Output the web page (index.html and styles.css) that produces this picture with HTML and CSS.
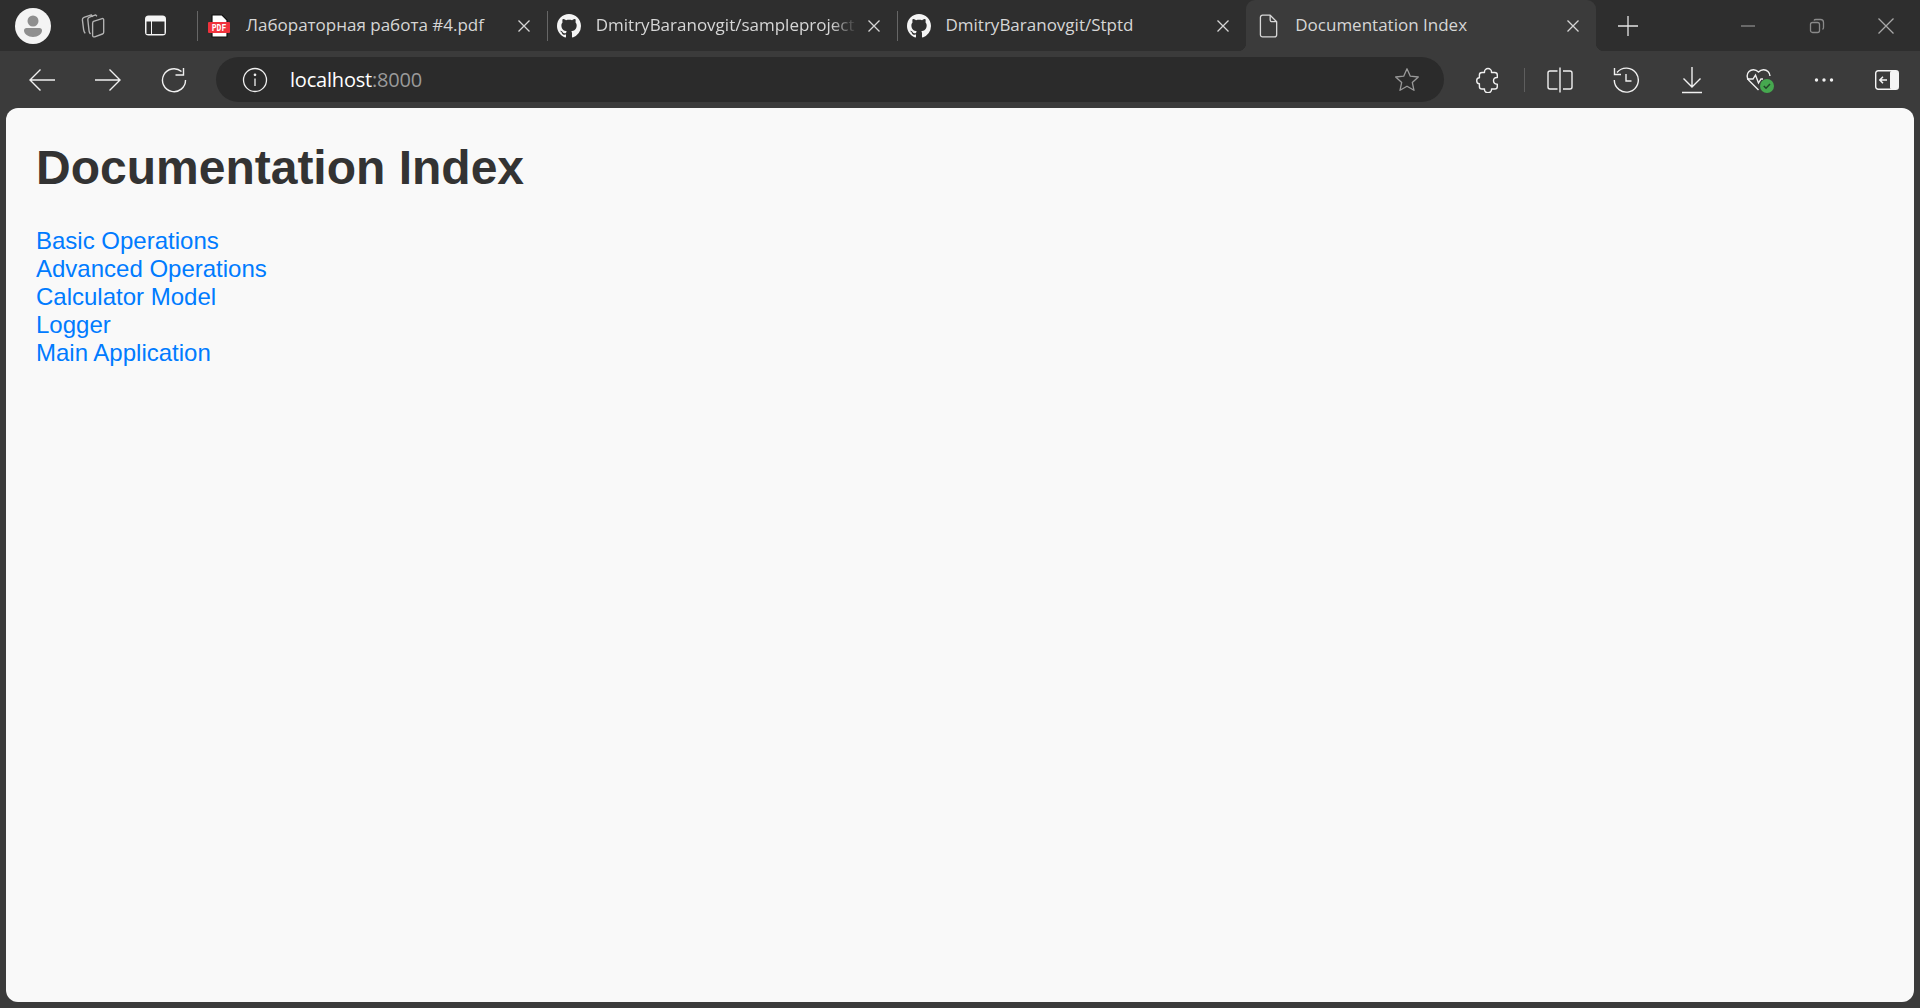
FILE: index.html
```html
<!DOCTYPE html>
<html lang="en">
<head>
  <meta charset="UTF-8" />
  <title>Documentation Index</title>
  <link rel="stylesheet" href="styles.css">
</head>
<body>

  <div class="tabstrip">
    <div class="strip-left">
      <div class="avatar">
        <svg width="36" height="36" viewBox="0 0 36 36"><circle cx="18" cy="18" r="18" fill="#f4f4f4"/><circle cx="18" cy="13" r="5.500" fill="#8f8f8f"/><path d="M9 22.500c0-1.400 1-2.500 2.500-2.500h13c1.500 0 2.500 1.100 2.500 2.500 0 3.500-4 6.500-9 6.500s-9-3-9-6.500z" fill="#8f8f8f"/></svg>
      </div>
      <div class="strip-btn">
        <svg class="collections-icon" width="32" height="32" viewBox="0 0 26 26" fill="none" stroke="#b4b4b4" stroke-width="1.100" stroke-linejoin="round"><path d="M13.500 5.500l-1-1.500-6 2c-1 .4-1.400 1-1.300 2l1 8c.1 1 .5 2 1.300 3"/><path d="M17 5l-1-1-5 1.800c-1 .4-1.500 1-1.400 2l1 9.200c.1 1 .5 1.800 1.200 2.500"/><path d="M14.200 9.300l7-2.300c.7-.2 1.300.2 1.300 1v10c0 .8-.4 1.300-1 1.500l-6.300 2.300c-.9.300-1.700-.2-1.700-1.100V11c0-.8.200-1.400.7-1.700z"/></svg>
      </div>
      <div class="strip-btn">
        <svg width="26" height="26" viewBox="0 0 26 26"><rect x="2" y="2.500" width="21" height="20" rx="3.500" fill="#f4f4f4"/><rect x="9" y="8.500" width="12.500" height="12.500" fill="#2e2e2e"/><rect x="3.500" y="8.500" width="4.500" height="12.500" fill="#2e2e2e"/></svg>
      </div>
    </div>

    <div class="tabs">
      <div class="tab">
        <span class="tab-sep"></span>
        <svg class="tab-icon" width="24" height="24" viewBox="0 0 24 24"><path d="M5 1h10l5 5v17H5z" fill="#fff" stroke="#111" stroke-width="1.200"/><rect x="1" y="8" width="22" height="11" rx="1" fill="#f0323c"/><text x="12" y="16.800" class="pdf-label" text-anchor="middle">PDF</text></svg>
        <span class="tab-title">Лабораторная работа #4.pdf</span>
        <svg class="tab-close" width="14" height="14" viewBox="0 0 14 14"><path d="M1.500 1.500l11 11M12.500 1.500l-11 11"/></svg>
      </div>
      <div class="tab">
        <span class="tab-sep"></span>
        <svg class="tab-icon" width="24" height="24" viewBox="0 0 16 16"><path fill="#f4f4f4" d="M8 0C3.580 0 0 3.580 0 8c0 3.540 2.290 6.530 5.470 7.590.4.070.55-.17.55-.38 0-.19-.01-.82-.01-1.490-2.010.37-2.530-.49-2.690-.94-.09-.23-.48-.94-.82-1.130-.28-.15-.68-.52-.01-.53.63-.01 1.080.58 1.230.82.72 1.210 1.870.87 2.330.66.070-.52.28-.87.51-1.070-1.780-.2-3.640-.89-3.640-3.950 0-.87.31-1.590.82-2.150-.08-.2-.36-1.020.08-2.120 0 0 .67-.21 2.200.82.64-.18 1.320-.27 2-.27.68 0 1.360.09 2 .27 1.530-1.040 2.200-.82 2.200-.82.44 1.100.16 1.920.08 2.120.51.56.82 1.270.82 2.150 0 3.070-1.870 3.750-3.650 3.950.29.25.54.73.54 1.480 0 1.070-.01 1.930-.01 2.200 0 .21.15.46.55.38A8.013 8.013 0 0016 8c0-4.420-3.580-8-8-8z"/></svg>
        <span class="tab-title faded">DmitryBaranovgit/sampleproject</span>
        <svg class="tab-close" width="14" height="14" viewBox="0 0 14 14"><path d="M1.500 1.500l11 11M12.500 1.500l-11 11"/></svg>
      </div>
      <div class="tab">
        <span class="tab-sep"></span>
        <svg class="tab-icon" width="24" height="24" viewBox="0 0 16 16"><path fill="#f4f4f4" d="M8 0C3.580 0 0 3.580 0 8c0 3.540 2.290 6.530 5.470 7.590.4.070.55-.17.55-.38 0-.19-.01-.82-.01-1.490-2.010.37-2.530-.49-2.690-.94-.09-.23-.48-.94-.82-1.130-.28-.15-.68-.52-.01-.53.63-.01 1.080.58 1.230.82.72 1.210 1.870.87 2.330.66.070-.52.28-.87.51-1.070-1.780-.2-3.640-.89-3.640-3.950 0-.87.31-1.590.82-2.150-.08-.2-.36-1.020.08-2.120 0 0 .67-.21 2.200.82.64-.18 1.320-.27 2-.27.68 0 1.360.09 2 .27 1.530-1.040 2.200-.82 2.200-.82.44 1.100.16 1.920.08 2.120.51.56.82 1.270.82 2.150 0 3.070-1.870 3.750-3.650 3.950.29.25.54.73.54 1.480 0 1.070-.01 1.930-.01 2.200 0 .21.15.46.55.38A8.013 8.013 0 0016 8c0-4.420-3.580-8-8-8z"/></svg>
        <span class="tab-title">DmitryBaranovgit/Stptd</span>
        <svg class="tab-close" width="14" height="14" viewBox="0 0 14 14"><path d="M1.500 1.500l11 11M12.500 1.500l-11 11"/></svg>
      </div>
      <div class="tab active">
        <span class="tab-sep"></span>
        <svg class="tab-icon" width="26" height="26" viewBox="0 0 24 24" fill="none" stroke="#d8d8d8" stroke-width="1.200" stroke-linejoin="round"><path d="M7 2h7l6 6v12a2 2 0 0 1-2 2H7a2 2 0 0 1-2-2V4a2 2 0 0 1 2-2z"/><path d="M14 2v4.500A1.500 1.500 0 0 0 15.500 8H20"/></svg>
        <span class="tab-title">Documentation Index</span>
        <svg class="tab-close" width="14" height="14" viewBox="0 0 14 14"><path d="M1.500 1.500l11 11M12.500 1.500l-11 11"/></svg>
      </div>
    </div>

    <div class="new-tab">
      <svg width="22" height="22" viewBox="0 0 22 22" fill="none" stroke="#e4e4e4" stroke-width="1.300"><path d="M11 1v20M1 11h20"/></svg>
    </div>
    <div class="spacer"></div>

    <div class="win-btn">
      <svg width="14" height="14" viewBox="0 0 14 14" fill="none" stroke="#8a8a8a" stroke-width="1.300"><path d="M0 7h14"/></svg>
    </div>
    <div class="win-btn">
      <svg width="16" height="16" viewBox="0 0 16 16" fill="none" stroke="#8a8a8a" stroke-width="1.300"><rect x="1.500" y="4.500" width="9" height="10" rx="2"/><path d="M5 2.500c.3-.7 1-1 1.800-1h4.700c1.700 0 3 1.300 3 3v5c0 .8-.4 1.500-1 1.800"/></svg>
    </div>
    <div class="win-btn">
      <svg width="16" height="16" viewBox="0 0 16 16" fill="none" stroke="#a8a8a8" stroke-width="1.300"><path d="M.5.500l15 15M15.500.500l-15 15"/></svg>
    </div>
  </div>

  <div class="toolbar">
    <div class="tool-btn">
      <svg width="28" height="24" viewBox="0 0 28 24" fill="none" stroke="#f0f0f0" stroke-width="1.400"><path d="M27 12H2M12.500 1.500L2 12l10.500 10.500"/></svg>
    </div>
    <div class="tool-btn">
      <svg width="28" height="24" viewBox="0 0 28 24" fill="none" stroke="#f0f0f0" stroke-width="1.400"><path d="M1 12h25M15.500 1.500L26 12 15.500 22.500"/></svg>
    </div>
    <div class="tool-btn">
      <svg width="26" height="26" viewBox="0 0 26 26" fill="none" stroke="#f0f0f0" stroke-width="1.400"><path d="M20.500 4.500A11.500 11.500 0 1 0 24.500 13"/><path d="M14.500 8h8V1"/></svg>
    </div>

    <div class="addressbar">
      <svg class="info-icon" width="26" height="26" viewBox="0 0 26 26" fill="none" stroke="#f0f0f0" stroke-width="1.300"><circle cx="13" cy="13" r="11.500"/><path d="M13 11.500V19"/><circle cx="13" cy="7.800" r=".7" fill="#f0f0f0"/></svg>
      <span class="url">localhost<span class="url-port">:8000</span></span>
      <svg class="star-icon" width="26" height="26" viewBox="0 0 26 26" fill="none" stroke="#9a9a9a" stroke-width="1.300" stroke-linejoin="round"><path d="M13 1.800l3.300 7.400 8 .8-6 5.400 1.700 7.900-7-4.100-7 4.100 1.700-7.900-6-5.400 8-.8z"/></svg>
    </div>

    <div class="tool-btn ext">
      <svg width="24" height="26" viewBox="0 0 24 26" fill="none" stroke="#f0f0f0" stroke-width="1.400" stroke-linejoin="round"><path d="M8.500 5.500c-.3-2.300 1.500-4 3.500-4s3.800 1.700 3.500 4h3.200c1.500 0 2.600 1.100 2.600 2.600v2.400c-2.500-.3-3.800 1.400-3.800 3.300s1.300 3.600 3.800 3.300v2.300c0 1.500-1.100 2.600-2.600 2.600h-3.200c.3 2.300-1.500 3.800-3.500 3.800s-3.800-1.500-3.500-3.800H6c-1.500 0-2.600-1.100-2.600-2.600v-2.600c-1.600 0-2.700-1.400-2.700-3s1.100-3 2.700-3V8.100c0-1.500 1.100-2.600 2.600-2.600z"/></svg>
    </div>
    <span class="tool-sep"></span>
    <div class="tool-btn split">
      <svg width="28" height="28" viewBox="0 0 28 28" fill="none" stroke="#f0f0f0" stroke-width="1.400"><path d="M11.500 5H4a2 2 0 0 0-2 2v14a2 2 0 0 0 2 2h7.500M17 5h7a2 2 0 0 1 2 2v14a2 2 0 0 1-2 2h-7M14 1.500v25"/></svg>
    </div>
    <div class="tool-btn">
      <svg width="28" height="28" viewBox="0 0 28 28" fill="none" stroke="#f0f0f0" stroke-width="1.400"><path d="M5 6.500A12 12 0 1 1 2.300 14"/><path d="M2.500 2v6.500H9"/><path d="M14 8v7h5.500"/></svg>
    </div>
    <div class="tool-btn">
      <svg width="22" height="28" viewBox="0 0 22 28" fill="none" stroke="#f0f0f0" stroke-width="1.400"><path d="M11 1v20M2.500 12.500L11 21l8.500-8.500M1 26.500h20"/></svg>
    </div>
    <div class="tool-btn">
      <svg class="heart-icon" width="30" height="28" viewBox="0 0 30 28" fill="none"><path d="M13.500 24L4 14.500C1.500 12 1.500 8 4 5.500s6.500-2.500 9.500.5c3-3 7-3 9.500-.5 1.300 1.300 2 2.900 2 4.500" stroke="#f0f0f0" stroke-width="1.400"/><path d="M2 13h6l2.500-4 3 8 2.500-4h2" stroke="#f0f0f0" stroke-width="1.400"/><circle cx="22" cy="20" r="7" fill="#46a84f"/><path d="M18.800 20l2.200 2.200 4-4.200" stroke="#23452a" stroke-width="1.500"/></svg>
    </div>
    <div class="tool-btn">
      <svg width="20" height="6" viewBox="0 0 20 6" fill="#f0f0f0"><circle cx="2.500" cy="3" r="1.700"/><circle cx="10" cy="3" r="1.700"/><circle cx="17.500" cy="3" r="1.700"/></svg>
    </div>
    <div class="tool-btn last">
      <svg width="24" height="20" viewBox="0 0 24 20"><rect x=".7" y=".7" width="22.600" height="18.600" rx="2.500" fill="none" stroke="#f4f4f4" stroke-width="1.400"/><rect x="15" y="1" width="8" height="18" rx="1.500" fill="#f4f4f4"/><path d="M12 10H5M8 6.800L4.800 10 8 13.200" fill="none" stroke="#f4f4f4" stroke-width="1.500"/></svg>
    </div>
  </div>

  <main class="page">
    <h1>Documentation Index</h1>
    <ul class="doc-list">
      <li><a href="#">Basic Operations</a></li>
      <li><a href="#">Advanced Operations</a></li>
      <li><a href="#">Calculator Model</a></li>
      <li><a href="#">Logger</a></li>
      <li><a href="#">Main Application</a></li>
    </ul>
  </main>

</body>
</html>
```

FILE: styles.css
```css
html, body {
  height: 100%;
}
body {
  margin: 0;
  display: flex;
  flex-direction: column;
  background: #3b3b3b;
  overflow: hidden;
}

/* tab strip */
.tabstrip {
  display: flex;
  height: 51px;
  background: #2e2e2e;
  font-family: "Open Sans", sans-serif;
}
.strip-left {
  display: flex;
  align-items: center;
  width: 197px;
  padding-left: 15px;
  box-sizing: border-box;
}
.avatar {
  display: flex;
  margin-right: 24px;
}
.strip-btn {
  display: flex;
  justify-content: center;
  width: 36px;
}
.strip-btn + .strip-btn {
  margin-left: 27px;
}
.collections-icon {
  margin-left: -2px;
}
.tabs {
  display: grid;
  grid-template-columns: repeat(4, minmax(0, 1fr));
  width: 1399px;
}
.tab {
  display: flex;
  align-items: center;
  padding-right: 16px;
  color: #d6d6d6;
  font-size: 17px;
  position: relative;
}
.tab-sep {
  width: 1px;
  height: 30px;
  background: #666;
  margin-right: 9px;
}
.tab.active .tab-sep {
  background: transparent;
}
.tab-icon {
  flex: none;
  margin-right: 15px;
}
.tab-title {
  flex: 1;
  overflow: hidden;
  white-space: nowrap;
  margin-right: 16px;
  line-height: 24px;
  margin-bottom: 2px;
}
.tab-title.faded {
  margin-right: 10px;
  -webkit-mask-image: linear-gradient(to right, #000 90%, transparent 100%);
  mask-image: linear-gradient(to right, #000 90%, transparent 100%);
}
.tab-close {
  flex: none;
  fill: none;
  stroke: #d6d6d6;
  stroke-width: 1.3;
}
.pdf-label {
  font-family: "DejaVu Sans Mono", monospace;
  font-size: 8px;
  font-weight: bold;
  fill: #fff;
}
.tab.active {
  background: #3b3b3b;
  border-radius: 9px 9px 0 0;
}
.tab.active .tab-icon {
  margin-left: -1px;
  margin-right: 14px;
}
/* concave corners either side of the active tab */
.tab.active::before,
.tab.active::after {
  content: "";
  position: absolute;
  bottom: 0;
  width: 8px;
  height: 8px;
}
.tab.active::before {
  left: -8px;
  background: radial-gradient(circle at 0 0, transparent 8px, #3b3b3b 8.500px);
}
.tab.active::after {
  right: -8px;
  background: radial-gradient(circle at 100% 0, transparent 8px, #3b3b3b 8.500px);
}
.new-tab {
  display: flex;
  align-items: center;
  justify-content: center;
  width: 64px;
}
.spacer {
  flex: 1;
}
.win-btn {
  display: flex;
  align-items: center;
  justify-content: center;
  width: 69px;
}

/* toolbar */
.toolbar {
  display: flex;
  align-items: center;
  height: 57px;
  padding-left: 9px;
  background: #3b3b3b;
  font-family: "Open Sans", sans-serif;
}
.tool-btn {
  display: flex;
  align-items: center;
  justify-content: center;
  width: 66px;
  flex: none;
}
.tool-btn.ext {
  margin-left: 11px;
}
.tool-btn.split {
  margin-left: 2px;
}
.tool-btn.last {
  width: 60px;
}
.heart-icon {
  margin-left: 3px;
}
.tool-sep {
  width: 1px;
  height: 24px;
  margin-left: 3px;
  background: #5e5e5e;
}
.addressbar {
  display: flex;
  align-items: center;
  width: 1228px;
  height: 45px;
  margin-left: 9px;
  padding: 0 24px 0 26px;
  box-sizing: border-box;
  border-radius: 23px;
  background: #2b2b2b;
  flex: none;
}
.info-icon {
  margin-right: 22px;
}
.url {
  flex: 1;
  color: #fff;
  font-size: 20px;
  letter-spacing: -0.2px;
  margin-bottom: 1px;
}
.url-port {
  color: #9a9a9a;
}

/* page content */
.page {
  flex: 1;
  margin: 0 6px 6px;
  padding: 32px 30px 30px;
  background: #f9f9f9;
  border-radius: 12px;
  color: #333;
  font-family: "Liberation Sans", Arial, sans-serif;
}
.page h1 {
  margin: 0 0 32px;
  font-size: 48px;
  line-height: 55px;
}
.doc-list {
  margin: 0;
  padding: 0;
  list-style: none;
  font-size: 24px;
  line-height: 28px;
}
.doc-list a {
  color: #007bff;
  text-decoration: none;
}
```
